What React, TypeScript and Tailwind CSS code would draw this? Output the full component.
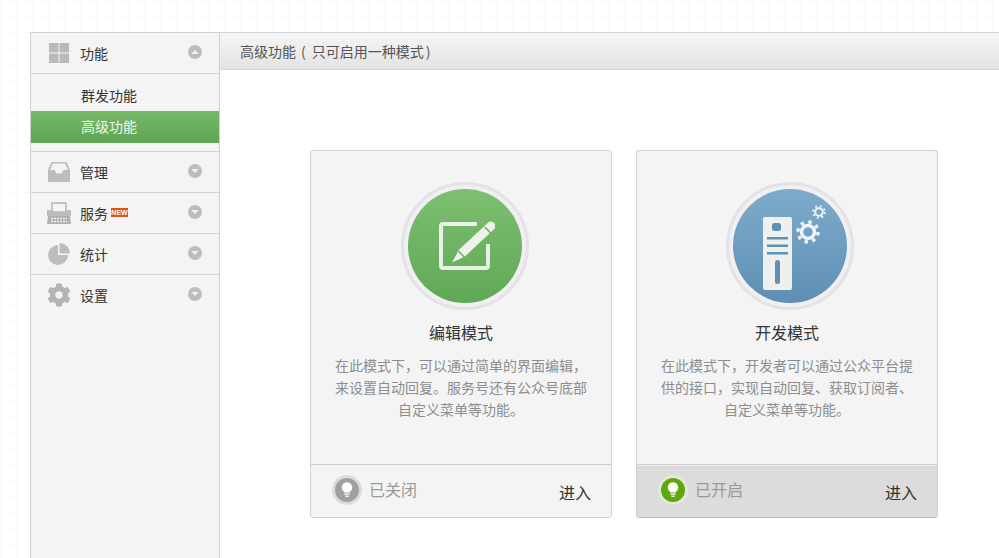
import { FaCog } from "react-icons/fa";

function Arrow({ up }: { up?: boolean }) {
  return (
    <span className="w-[14px] h-[14px] rounded-full bg-[#bdbdbd] flex items-center justify-center shrink-0">
      <svg width="8" height="6" viewBox="0 0 8 6">
        <path d={up ? "M4 1L7.500 5H.5z" : "M.5 1h7L4 5z"} fill="#f4f4f4" />
      </svg>
    </span>
  );
}

function GridIcon() {
  return (
    <svg width="20" height="20" viewBox="0 0 20 20" fill="#b9b9b9">
      <rect x="0" y="0" width="9.500" height="9.500" />
      <rect x="10.500" y="0" width="9.500" height="9.500" />
      <rect x="0" y="10.500" width="9.500" height="9.500" />
      <rect x="10.500" y="10.500" width="9.500" height="9.500" />
    </svg>
  );
}

function InboxIcon() {
  return (
    <svg width="22" height="20" viewBox="0 0 22 20">
      <path d="M3.500 0h15L22 8v12H0V8z" fill="#bdbdbd" />
      <path d="M5 1.500h12l3 6.500h-4.500l-2 3.500h-5L6.500 8H2z" fill="#f4f4f4" />
    </svg>
  );
}

function PrinterIcon() {
  return (
    <svg width="24" height="22" viewBox="0 0 24 22">
      <path d="M5 1h14v9H5z" fill="#f4f4f4" stroke="#b4b4b4" strokeWidth="1.500" />
      <path d="M0 8h4v2h16V8h4v6H0z" fill="#bcbcbc" />
      <path d="M1 14h22l1 8H0z" fill="#b0b0b0" />
      <path d="M4 16.500h16M4 19.500h16" stroke="#f4f4f4" strokeWidth="1.500" strokeDasharray="2 1" />
    </svg>
  );
}

function PieIcon() {
  return (
    <svg width="22" height="22" viewBox="0 0 22 22">
      <path d="M10 2a10 10 0 1 0 10 10H10z" fill="#bdbdbd" />
      <path d="M11.500 0a10.500 10.500 0 0 1 10.500 10.500H11.500z" fill="#bdbdbd" />
    </svg>
  );
}

function EditIcon() {
  return (
    <svg width="60" height="60" viewBox="0 0 60 60" fill="none">
      <path d="M42 8H8a2 2 0 0 0-2 2v40a2 2 0 0 0 2 2h43a2 2 0 0 0 2-2V28" stroke="#e9f0e5" strokeWidth="4" />
      <path d="M27 37L56 10" stroke="#eef3ea" strokeWidth="9" strokeLinecap="round" />
      <path d="M24 34l6 6.500-13 6z" fill="#eef3ea" />
      <path d="M23.500 35l6 6.500" stroke="#6cae60" strokeWidth="1.500" />
      <path d="M50 11l5.500 6" stroke="#6cae60" strokeWidth="1.500" />
    </svg>
  );
}

function Gear({ size, className }: { size: number; className: string }) {
  return (
    <svg width={size} height={size} viewBox="0 0 24 24" fill="none" stroke="#eef2f4" className={className}>
      <circle cx="12" cy="12" r="6.500" strokeWidth="3.500" />
      <circle cx="12" cy="12" r="10" strokeWidth="3.500" strokeDasharray="3.400 4.454" />
    </svg>
  );
}

function ServerIcon() {
  return (
    <svg width="29" height="73" viewBox="0 0 29 73">
      <rect width="29" height="73" rx="2" fill="#eef0f0" />
      <rect x="9" y="6" width="9" height="8" rx="2.500" fill="#5f8fb3" />
      <rect x="4" y="20" width="21" height="2.500" fill="#5f8fb3" />
      <rect x="4" y="27.500" width="21" height="2.500" fill="#5f8fb3" />
      <rect x="4" y="35" width="21" height="2.500" fill="#5f8fb3" />
      <rect x="12" y="43" width="5" height="24" rx="2.500" fill="#5f8fb3" />
    </svg>
  );
}

function Bulb() {
  return (
    <svg width="12" height="16" viewBox="0 0 14 18">
      <path d="M7 0a6 6 0 0 1 3.500 10.900V12h-7v-1.100A6 6 0 0 1 7 0z" fill="#fff" />
      <rect x="4" y="13" width="6" height="1.500" fill="#fff" />
      <rect x="5" y="15.500" width="4" height="1.500" fill="#fff" />
    </svg>
  );
}

function MenuRow({ icon, label, badge }: { icon: React.ReactNode; label: string; badge?: boolean }) {
  return (
    <div className="h-[41px] flex items-center border-b border-[#d3d3d3] pl-[16px] pr-[17px]">
      <span className="w-[24px] h-[24px] flex items-center justify-center shrink-0">{icon}</span>
      <span className="ml-[9px] text-sm leading-none text-[#333]">{label}</span>
      {badge && (
        <span className="ml-[3px] -mt-[1px] w-[17px] h-[9px] bg-[#df5316] text-white text-[7px] font-bold leading-[9px] text-center font-['Liberation_Sans',sans-serif]">
          NEW
        </span>
      )}
      <span className="ml-auto -mt-[3px]">
        <Arrow />
      </span>
    </div>
  );
}

function ModeCard({
  icon,
  iconBg,
  title,
  lines,
  status,
  on,
}: {
  icon: React.ReactNode;
  iconBg: string;
  title: string;
  lines: string[];
  status: string;
  on?: boolean;
}) {
  return (
    <div
      className={`w-[302px] h-[368px] rounded-[3px] border bg-[#f4f4f4] flex flex-col overflow-hidden ${
        on ? "border-[#d0d0d0] border-b-[#bcbcbc]" : "border-[#d2d2d2]"
      }`}
    >
      <div className="flex-1 flex flex-col items-center pt-[31px]">
        <div
          className={`w-[128px] h-[128px] rounded-full bg-[#f0eff1] border-[3px] border-[#e3e2e4] flex items-center justify-center ${
            on ? "ml-[6px]" : "ml-[8px]"
          }`}
        >
          <div className={`w-[114px] h-[114px] rounded-full flex items-center justify-center ${iconBg}`}>{icon}</div>
        </div>
        <div className="mt-[10px] text-base leading-[24px] text-[#333]">{title}</div>
        <div className="mt-[10px] text-sm leading-[22px] text-[#8d8d8d] text-center">
          {lines.map((l) => (
            <div key={l}>{l}</div>
          ))}
        </div>
      </div>
      <div
        className={`h-[53px] border-t flex pl-[21px] pr-[20px] shadow-[inset_0_1px_0_#eeeeee] ${
          on ? "bg-[#dcdcdc] border-[#cfcfcf]" : "bg-[#f4f4f4] border-[#d0d0d0]"
        }`}
      >
        <div className="flex items-center h-[50px]">
          <span
            className={`w-[30px] h-[30px] rounded-full flex items-center justify-center ${
              on ? "bg-[#5fa80b] border-[3px] border-[#e3e8da]" : "bg-[#a0a0a0] border-[3px] border-[#dcdcdc]"
            }`}
          >
            <Bulb />
          </span>
          <span className="ml-[7px] -mt-[2px] text-base text-[#999] leading-none">{status}</span>
        </div>
        <span className="ml-auto mt-[15px] text-base leading-[24px] text-[#333]">进入</span>
      </div>
    </div>
  );
}

export default function App() {
  return (
    <div className="h-[558px] overflow-hidden bg-white bg-[linear-gradient(#fafafa_1px,transparent_1px),linear-gradient(90deg,#fafafa_1px,transparent_1px)] bg-[size:16px_16px] pt-[32px] pl-[30px] font-['Noto_Sans_CJK_SC','Noto_Sans',sans-serif]">
      <div className="flex h-full">
        {/* Sidebar */}
        <div className="w-[190px] shrink-0 bg-[#f4f4f4] border-x border-t border-[#cfcfcf]">
          <div className="h-[41px] flex items-center border-b border-[#d3d3d3] pl-[18px] pr-[17px]">
            <GridIcon />
            <span className="ml-[11px] text-sm leading-none text-[#333]">功能</span>
            <span className="ml-auto -mt-[3px]">
              <Arrow up />
            </span>
          </div>
          <div className="pt-[6px] pb-[8px] border-b border-[#d3d3d3]">
            <div className="h-[31px] leading-[31px] pl-[50px] text-sm text-[#333]">群发功能</div>
            <div className="h-[32px] leading-[30px] pl-[50px] text-sm text-[#f0f7ec] bg-linear-to-b from-[#74b868] to-[#5fa554]">
              高级功能
            </div>
          </div>
          <MenuRow icon={<InboxIcon />} label="管理" />
          <MenuRow icon={<PrinterIcon />} label="服务" badge />
          <MenuRow icon={<PieIcon />} label="统计" />
          <div className="h-[41px] flex items-center pl-[16px] pr-[17px]">
            <span className="w-[24px] h-[24px] -mt-[2px] flex items-center justify-center shrink-0">
              <FaCog className="text-[24px] text-[#b4b4b4]" />
            </span>
            <span className="ml-[9px] -mt-[2px] text-sm leading-none text-[#333]">设置</span>
            <span className="ml-auto -mt-[3px]">
              <Arrow />
            </span>
          </div>
        </div>

        {/* Main */}
        <div className="flex-1 min-w-0 bg-white">
          <div className="h-[38px] border-y border-[#d4d4d4] bg-linear-to-b from-[#f5f5f5] to-[#e3e3e3] pl-[20px] text-sm leading-[36px] text-[#555]">
            高级功能<span className="ml-[5px] mr-[6px]">(</span>只可启用一种模式<span className="ml-[2px]">)</span>
          </div>
          <div className="pl-[90px] pt-[80px] flex gap-[24px]">
            <ModeCard
              icon={<EditIcon />}
              iconBg="bg-linear-to-b from-[#7cbf70] to-[#60a856]"
              title="编辑模式"
              lines={["在此模式下，可以通过简单的界面编辑，", "来设置自动回复。服务号还有公众号底部", "自定义菜单等功能。"]}
              status="已关闭"
            />
            <ModeCard
              icon={
                <div className="relative w-full h-full flex items-center pl-[30px]">
                  <span className="mt-[14px]">
                    <ServerIcon />
                  </span>
                  <Gear size={24} className="absolute left-[63px] top-[31px]" />
                  <Gear size={14} className="absolute left-[79px] top-[16px]" />
                </div>
              }
              iconBg="bg-linear-to-b from-[#7dabcc] to-[#5e8fb3]"
              title="开发模式"
              lines={["在此模式下，开发者可以通过公众平台提", "供的接口，实现自动回复、获取订阅者、", "自定义菜单等功能。"]}
              status="已开启"
              on
            />
          </div>
        </div>
      </div>
    </div>
  );
}
